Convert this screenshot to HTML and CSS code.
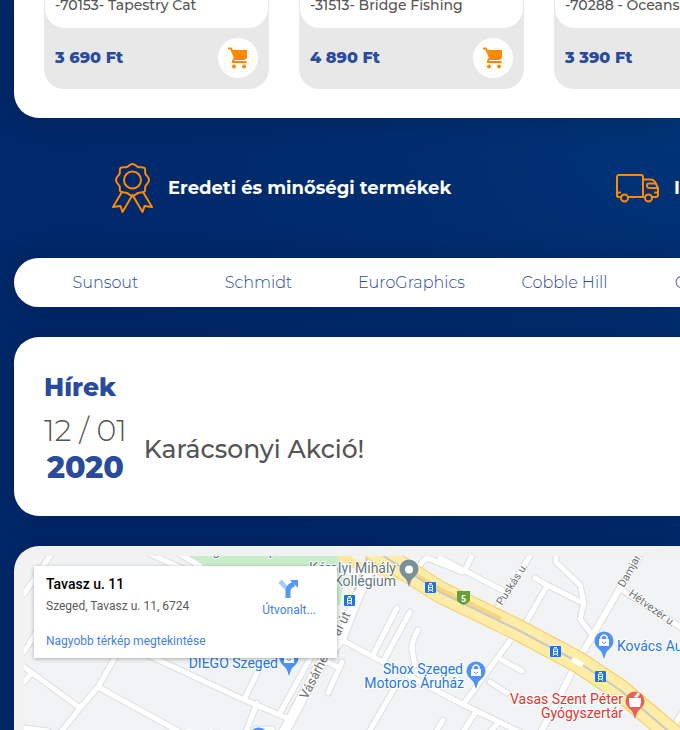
FILE: index.html
```html
<!DOCTYPE html>
<html lang="hu">
<head>
<meta charset="utf-8">
<meta name="viewport" content="width=device-width, initial-scale=1">
<title>Puzzle</title>
<link rel="stylesheet" href="styles.css">
</head>
<body>
<svg width="0" height="0" class="defs" aria-hidden="true">
  <symbol id="cart" viewBox="0 0 24 24"><path d="M2 2.500H5L9 11.500L7 15V16H20.500" fill="none" stroke="#ff8a00" stroke-width="2"/><path d="M5 4H21V12L18.500 14H9Z"/><circle cx="8" cy="20.500" r="2"/><circle cx="18" cy="20.500" r="2"/></symbol>
</svg>
<main class="page">
  <section class="panel products">
    <article class="product">
      <h3 class="product-name">-70153- Tapestry Cat</h3>
      <div class="product-buy"><span class="price">3 690 Ft</span><button class="cart-button" aria-label="Kosárba"><svg class="cart-icon"><use href="#cart"/></svg></button></div>
    </article>
    <article class="product">
      <h3 class="product-name">-31513- Bridge Fishing</h3>
      <div class="product-buy"><span class="price">4 890 Ft</span><button class="cart-button" aria-label="Kosárba"><svg class="cart-icon"><use href="#cart"/></svg></button></div>
    </article>
    <article class="product">
      <h3 class="product-name">-70288 - Oceans</h3>
      <div class="product-buy"><span class="price">3 390 Ft</span><button class="cart-button" aria-label="Kosárba"><svg class="cart-icon"><use href="#cart"/></svg></button></div>
    </article>
  </section>

  <section class="features">
    <div class="feature">
      <svg class="feature-icon" viewBox="0 0 42 50" width="42" height="50" aria-hidden="true">
        <circle cx="20.500" cy="17" r="8.500"/>
        <path d="M20.500 1C23 1 24 3.500 26 4C28 4.500 31 3.500 32.500 5C34 6.500 32.500 9 33.500 11C34.500 13 37 14 37 17C37 20 34.500 21 33.500 23C32.500 25 34 27 32.500 28.500C31 30 28 29 26 30C24 31 23 33 20.500 33C18 33 17 31 15 30C13 29 10 30 8.500 28.500C7 27 8.500 25 7.500 23C6.500 21 4 20 4 17C4 14 6.500 13 7.500 11C8.500 9 7 6.500 8.500 5C10 3.500 13 4.500 15 4C17 3.500 18 1 20.500 1Z"/>
        <path d="M10 29L1 44L8.500 43L10.500 49L20.500 32L30.500 49L32.500 43L40 44L31 29"/>
      </svg>
      <span>Eredeti és minőségi termékek</span>
    </div>
    <div class="feature">
      <svg class="feature-icon" viewBox="0 0 44 30" width="44" height="30" aria-hidden="true">
        <path d="M5 24H2.500Q1 24 1 22.500V4Q1 2 3 2H25Q27 2 27 4V24M12 24H28M36 24H40Q42 24 42 22V15L39 9Q37.500 6.500 35 6.500H27"/>
        <circle cx="8.500" cy="25" r="3.500"/><circle cx="32.500" cy="25" r="3.500"/>
        <path d="M39.500 10.500H33Q31 10.500 31 12.500Q31 15 34 15H42M39 19.500H42M1 19.500H4"/>
      </svg>
      <span>Ingyenes</span>
    </div>
  </section>

  <nav class="panel brands" aria-label="Márkák">
    <a href="#">Sunsout</a><a href="#">Schmidt</a><a href="#">EuroGraphics</a><a href="#">Cobble Hill</a><a href="#">Castorland</a>
  </nav>

  <section class="panel news">
    <h2>Hírek</h2>
    <article class="news-item">
      <time class="news-date" datetime="2020-12-01"><span class="day">12 / 01</span><strong class="year">2020</strong></time>
      <a class="news-title" href="#">Karácsonyi Akció!</a>
    </article>
  </section>

  <section class="panel map">
    <div class="map-view">
      <svg class="map-canvas" viewBox="24 556 656 174" preserveAspectRatio="xMinYMin slice" role="img" aria-label="Térkép">
        <defs>
          <g id="roads">
            <path d="M50 556L24 594M24 652L44 620M118 652L98 687L80 708L61 732M24 667L80 708M24 682L32 673M98 687L180 732M148 655L240 698L287 718M24 728L48 731M150 554L190 572M178 553L200 566"/>
            <path d="M312 655L280 713M257 673L245 698M257 703L246 732M256 729H272M342 640L383 662L460 703L520 732M373 655L397 608M383 662L410 612M418 630Q411 642 412 650L415 665M342 662L328 693M326 661L337 667M398 682L369 732M443 720L436 732"/>
            <path d="M440 558L502 590M472 556L466 568M420 566Q424 557 430 559L462 572M530 556L497 608M535 578L547 585L583 603M547 586L525 624M556 554V562L580 585L584 603L580 619L590 632M512 638L465 702M502 660L522 671M490 682L507 693M475 713L463 732M498 723L490 732M682 713L670 732M622 590L682 628"/>
          </g>
          <g id="avenues"><path d="M378 550Q357 595 342 637L318 668L284 732"/></g>
          <path id="boulevard" d="M374 550L440 592L518 630L578 662L620 690L673 735"/>
          <g id="tram"><rect width="11" height="11" rx="1" fill="#1a73e8"/><path d="M4 1.500H7M3.500 3H7.500V8H3.500ZM3 10L4.500 8M8 10L6.500 8M4 5.500H7" fill="none" stroke="#fff"/></g>
          <path id="pin" d="M0 17L-2 11C-4 7-9.500 5-9.500-1A9.500 9.500 0 0 1 9.500-1C9.500 5 4 7 2 11Z"/>
          <g id="bag"><use href="#pin" fill="#4f92f5"/><path d="M-5-3H5V4H-5Z" fill="#fff"/><path d="M-3-3V-5Q0-9 3-5V-3" fill="none" stroke="#fff" stroke-width="1.500"/><path d="M-2 0Q0 3 2 0" fill="none" stroke="#4f92f5"/></g>
        </defs>
        <rect x="24" y="556" width="1400" height="400" fill="#f1f3f4"/>
        <path d="M184 556H338L346 570L340 605H260Z" fill="#c8eec9"/>
        <use href="#roads" class="road-edge"/><use href="#avenues" class="avenue-edge"/>
        <path d="M642 552L620 588L583 652M573 670L541 732" class="street-edge"/>
        <use href="#roads" class="road"/><use href="#avenues" class="avenue"/>
        <path d="M642 552L620 588L583 652M573 670L541 732" class="street"/>
        <path d="M370 550L355 590" class="rail"/>
        <path d="M338 551Q352 567 372 569L415 580" class="branch"/>
        <use href="#boulevard" class="boulevard-edge"/><use href="#boulevard" class="boulevard"/>
        <path d="M402 567L440 589L500 618" class="boulevard-gap"/>
        <use href="#boulevard" class="rail"/>
        <path d="M574 660L581 664" class="road"/>
        <g class="map-road-name">
          <text transform="translate(307 700) rotate(-63)">Vásárhelyi Pál út</text>
          <text class="small" transform="translate(502 606) rotate(-57)">Puskás u.</text>
          <text class="small" transform="translate(624 588) rotate(-61)">Damjanich</text>
          <text class="small" transform="translate(628 595) rotate(36)">Hétvezér u.</text>
        </g>
        <g class="map-label place"><text x="396" y="573" text-anchor="end">Károlyi Mihály</text><text x="396" y="586" text-anchor="end">Kollégium</text><text x="296" y="555" text-anchor="end">Ligetfürdő park</text></g>
        <g class="map-label shop"><text x="278" y="668" text-anchor="end">DIEGO Szeged</text><text x="463" y="674" text-anchor="end">Shox Szeged</text><text x="464" y="688" text-anchor="end">Motoros Áruház</text><text x="617" y="651">Kovács Autó</text><text x="232" y="741" text-anchor="end">Szűcs hús</text></g>
        <g class="map-label health"><text x="623" y="704" text-anchor="end">Vasas Szent Péter</text><text x="623" y="718" text-anchor="end">Gyógyszertár</text></g>
        <use href="#pin" x="409" y="570" fill="#78909c"/><circle cx="409" cy="569.500" r="4" fill="#fff"/>
        <use href="#bag" x="289" y="659"/><use href="#bag" x="476" y="672"/><use href="#bag" x="604" y="642"/><use href="#bag" x="259" y="738"/>
        <use href="#pin" x="635" y="702" fill="#ec5f58"/><path d="M629 698H641V702L640 707H630L629 702ZM634 697L638 692L640 694L637 698" fill="#fff"/>
        <use href="#tram" x="344" y="595"/><use href="#tram" x="425" y="582"/><use href="#tram" x="550" y="646"/><use href="#tram" x="595" y="671"/>
        <path d="M457 591H470V600Q469 603 463.500 605Q458 603 457 600Z" fill="#689f38"/><text x="463.500" y="602" class="route">5</text>
      </svg>
      <aside class="place-card">
        <div class="place-info"><h3>Tavasz u. 11</h3><p>Szeged, Tavasz u. 11, 6724</p><a href="#">Nagyobb térkép megtekintése</a></div>
        <a class="directions" href="#"><svg width="20" height="20" viewBox="0 0 20 20" aria-hidden="true"><path d="M1 2L9 11" fill="none" stroke="#a9c9f8" stroke-width="4.500"/><path d="M9 19V12Q9 8 13 6L15 5" fill="none" stroke="#5499ef" stroke-width="5"/><path d="M11 1H19V9Z" fill="#5499ef"/></svg><span>Útvonalt...</span></a>
      </aside>
    </div>
  </section>
</main>
</body>
</html>
```
FILE: styles.css
```css
* { box-sizing: border-box; }

body {
  margin: 0;
  overflow-x: hidden;
  font-family: Montserrat, Inter, "Open Sans", sans-serif;
  color: #555;
  background: radial-gradient(circle at 680px 100px, #003478 0, #002c6e 300px, #00286a 600px);
}

h2, h3, p { margin: 0; }
a { color: inherit; text-decoration: none; }
.defs { position: absolute; }
.page { padding-left: 14px; overflow: hidden; }

.panel {
  background: #fff;
  border-radius: 25px 0 0 25px;
  box-shadow: 0 0 30px rgba(0, 0, 0, 0.2);
}

.products {
  display: flex;
  gap: 30px;
  padding: 0 0 29px 30px;
  border-radius: 0 0 0 25px;
  overflow: hidden;
}

.product {
  flex: 0 0 225px;
  padding: 0 1px 1px;
  background: #e8e8e8;
  border-radius: 0 0 20px 20px;
}

.product-name {
  height: 28px;
  padding-left: 10px;
  font-size: 14px;
  font-weight: 500;
  line-height: 10px;
  background: #fff;
  border-radius: 0 0 20px 20px;
}

.product-buy {
  display: flex;
  align-items: center;
  justify-content: space-between;
  padding: 10px;
}

.price { font-size: 16px; line-height: 18px; font-weight: 800; color: #2a4b9b; }

.cart-button {
  display: grid;
  place-items: center;
  width: 40px;
  height: 40px;
  padding: 0;
  border: 0;
  border-radius: 50%;
  background: #fff;
}

.cart-icon { width: 24px; height: 24px; fill: #ff8a00; }

.features {
  display: grid;
  grid-template-columns: 504px 504px;
  align-items: center;
  height: 140px;
  padding-left: 98px;
}

.feature {
  display: flex;
  align-items: center;
  gap: 14px;
  font-size: 18px;
  font-weight: 700;
  color: #fff;
  white-space: nowrap;
}

.feature-icon {
  flex: none;
  fill: none;
  stroke: #ff8a00;
  stroke-width: 2;
  stroke-linejoin: round;
  stroke-linecap: round;
}

.brands {
  display: flex;
  padding-left: 15px;
  overflow: hidden;
}

.brands a {
  flex: 0 0 153px;
  font-size: 16px;
  font-weight: 300;
  line-height: 49px;
  text-align: center;
  color: #2a4b9b;
}

.news { margin-top: 30px; padding: 35px 30px 30px; }
.news h2 { font-size: 25px; line-height: 31px; font-weight: 800; color: #2a4b9b; }
.news-item { display: flex; align-items: center; gap: 17px; margin-top: 9px; }
.news-date { display: flex; flex-direction: column; align-items: center; font-size: 30px; line-height: 37px; }
.day { font-weight: 300; }
.year { font-weight: 800; color: #2a4b9b; }
.news-title { font-size: 25px; font-weight: 500; }

.map {
  margin-top: 30px;
  padding: 10px 0 0 10px;
  background: #f2f2f2;
  border-radius: 25px 0 0 0;
}

.map-view { position: relative; overflow: hidden; font-family: Roboto, sans-serif; }
.map-canvas { display: block; width: 100%; height: 174px; }

.road, .road-edge, .avenue, .avenue-edge, .street, .street-edge,
.boulevard, .boulevard-edge, .boulevard-gap, .branch, .rail { fill: none; stroke-linejoin: round; stroke-linecap: round; }
.road-edge { stroke: #dcdfe2; stroke-width: 7; }
.road { stroke: #fff; stroke-width: 5; }
.street-edge { stroke: #dcdfe2; stroke-width: 8; }
.street { stroke: #fff; stroke-width: 6; }
.avenue-edge { stroke: #dcdfe2; stroke-width: 12; }
.avenue { stroke: #fff; stroke-width: 10; }
.branch { stroke: #ffe89a; stroke-width: 9; }
.boulevard-edge { stroke: #f8cd68; stroke-width: 22; }
.boulevard { stroke: #ffeca6; stroke-width: 20; }
.boulevard-gap { stroke: #f9d67a; stroke-width: 4; }
.rail { stroke: #c6c8ca; stroke-width: 2; }

.map-label, .map-road-name { stroke: #fff; stroke-width: 2; stroke-linejoin: round; paint-order: stroke; }
.map-label { font-size: 14px; }
.map-road-name { font-size: 13px; fill: #6d7074; }
.small { font-size: 11px; }
.place { fill: #5f7880; }
.shop { fill: #2576e3; }
.health { fill: #dd3731; }
.route { font-size: 9px; font-weight: 700; fill: #fff; stroke: none; text-anchor: middle; }

.place-card {
  position: absolute;
  top: 10px;
  left: 10px;
  display: flex;
  justify-content: space-between;
  width: 303px;
  padding: 9px 21px 8px 12px;
  font-size: 12px;
  line-height: 18px;
  background: #fff;
  box-shadow: 0 1px 4px rgba(0, 0, 0, 0.3);
}

.place-info h3 { font-size: 14px; font-weight: 500; color: #000; }
.place-info p { margin: 4px 0 17px; color: #5b5b5b; }
.place-info a, .directions { color: #427fed; }
.directions { display: flex; flex-direction: column; align-items: center; padding-top: 4px; gap: 2px; }
```
